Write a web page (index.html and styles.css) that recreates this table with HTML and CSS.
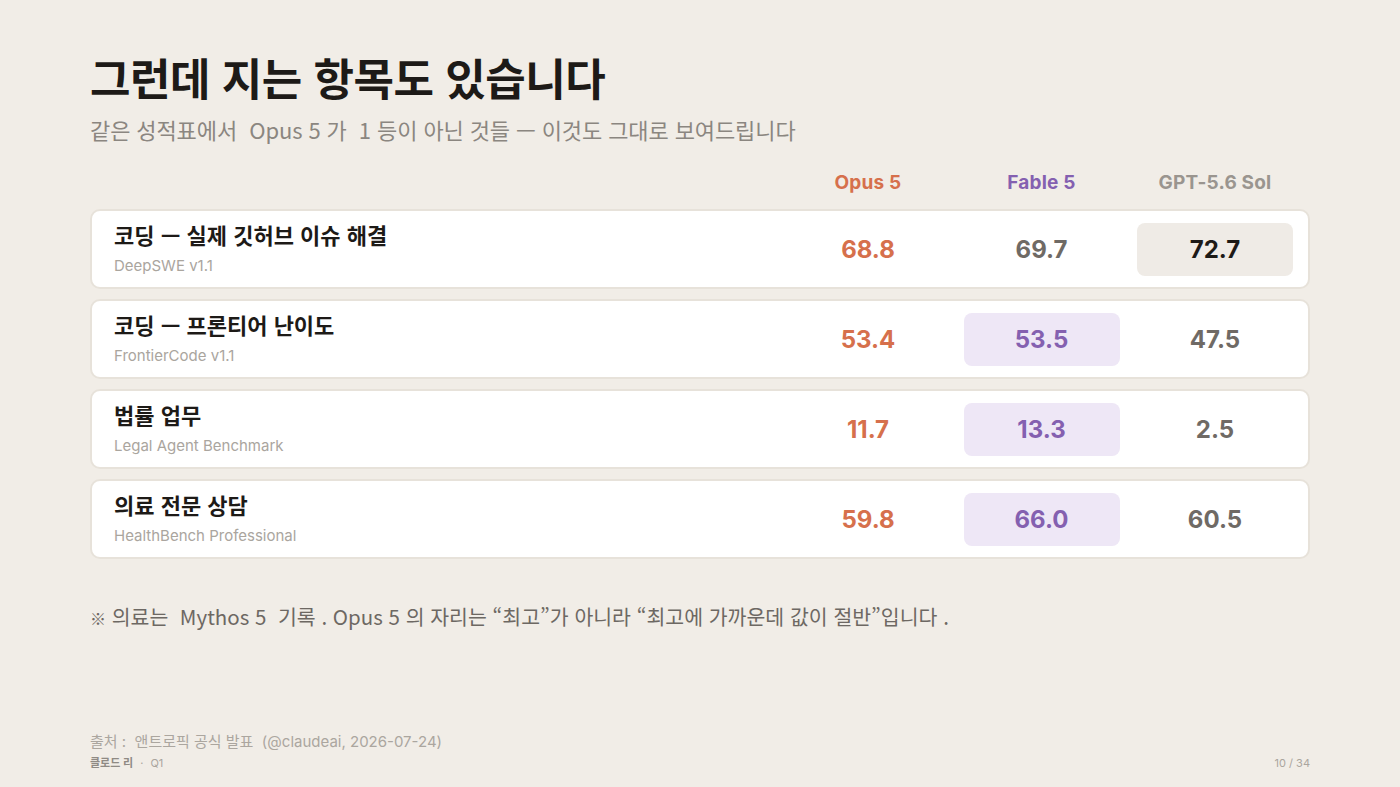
FILE: index.html
```html
<!DOCTYPE html>
<html lang="ko">
<head>
<meta charset="utf-8">
<link rel="stylesheet" href="styles.css">
</head>
<body>
<div class="slide">
  <h1 class="title">그런데 지는 항목도 있습니다</h1>
  <p class="subtitle">같은 성적표에서 &nbsp;Opus 5 가 &nbsp;1 등이 아닌 것들 — 이것도 그대로 보여드립니다</p>

  <div class="head-row">
    <div></div>
    <div class="col-h opus">Opus 5</div>
    <div class="col-h fable">Fable 5</div>
    <div class="col-h gpt">GPT-5.6 Sol</div>
  </div>

  <div class="rows">
    <div class="row">
      <div class="label"><div class="name">코딩 — 실제 깃허브 이슈 해결</div><div class="bench">DeepSWE v1.1</div></div>
      <div class="cell opus">68.8</div>
      <div class="cell plain">69.7</div>
      <div class="cell win-gpt">72.7</div>
    </div>
    <div class="row">
      <div class="label"><div class="name">코딩 — 프론티어 난이도</div><div class="bench">FrontierCode v1.1</div></div>
      <div class="cell opus">53.4</div>
      <div class="cell win-fable">53.5</div>
      <div class="cell plain">47.5</div>
    </div>
    <div class="row">
      <div class="label"><div class="name">법률 업무</div><div class="bench">Legal Agent Benchmark</div></div>
      <div class="cell opus">11.7</div>
      <div class="cell win-fable">13.3</div>
      <div class="cell plain">2.5</div>
    </div>
    <div class="row">
      <div class="label"><div class="name">의료 전문 상담</div><div class="bench">HealthBench Professional</div></div>
      <div class="cell opus">59.8</div>
      <div class="cell win-fable">66.0</div>
      <div class="cell plain">60.5</div>
    </div>
  </div>

  <p class="note"><span class="mark">※</span> 의료는 &nbsp;Mythos 5 &nbsp;기록 . Opus 5 의 자리는 “최고”가 아니라 “최고에 가까운데 값이 절반”입니다 .</p>

  <div class="footer">
    <div class="source">출처 : &nbsp;앤트로픽 공식 발표 &nbsp;(@claudeai, 2026-07-24)</div>
    <div class="bottom">
      <div class="brand"><span class="brand-name">클로드 리</span> <span class="dot">·</span> Q1</div>
      <div class="page">10 / 34</div>
    </div>
  </div>
</div>
</body>
</html>
```

FILE: styles.css
```css
* { box-sizing: border-box; }
html, body { margin: 0; padding: 0; }
body {
  background: #f1ede7;
  font-family: Inter, "Noto Sans CJK KR", sans-serif;
  color: #1f1c19;
}
.slide {
  width: 1400px;
  height: 787px;
  padding: 47px 90px 0 90px;
  display: flex;
  flex-direction: column;
}
.title {
  margin: 0;
  font-size: 44px;
  font-weight: 700;
  letter-spacing: -0.5px;
  line-height: 60px;
  font-family: "Noto Sans CJK KR", sans-serif;
  color: #1d1a17;
}
.subtitle {
  margin: 7px 0 0 0;
  font-size: 22px;
  line-height: 30px;
  color: #8b8680;
  font-family: "Noto Sans CJK KR", sans-serif;
  letter-spacing: -0.1px;
}
.head-row, .row {
  display: grid;
  grid-template-columns: 1fr 156px 156px 156px;
  column-gap: 17.5px;
  padding: 0 15px 0 22px;
}
.head-row {
  margin-top: 21px;
  height: 34px;
  align-items: center;
  padding-left: 24px;
  padding-right: 17px;
}
.col-h {
  text-align: center;
  font-size: 19px;
  font-weight: 700;
  letter-spacing: 0.2px;
}
.col-h.opus { color: #d6704c; }
.col-h.fable { color: #8460b0; }
.col-h.gpt { color: #9a958f; }
.rows {
  margin-top: 10px;
  display: flex;
  flex-direction: column;
  gap: 10px;
}
.row {
  background: #ffffff;
  border: 2px solid #e7e2da;
  border-radius: 10px;
  height: 80px;
  align-items: center;
}
.label { display: flex; flex-direction: column; }
.name {
  font-family: "Noto Sans CJK KR", sans-serif;
  font-size: 22px;
  font-weight: 700;
  line-height: 30px;
  color: #1d1a17;
  margin-top: -3px;
}
.bench {
  font-size: 15px;
  line-height: 20px;
  color: #aaa59e;
  margin-top: 7px;
}
.cell {
  height: 53px;
  border-radius: 8px;
  display: flex;
  align-items: center;
  justify-content: center;
  font-size: 24px;
  font-weight: 700;
}
.cell.opus { color: #d6704c; }
.cell.plain { color: #6f6a65; }
.cell.win-gpt { background: #efebe6; color: #1d1a17; }
.cell.win-fable { background: #eee7f6; color: #8460b0; }
.note {
  margin: 42px 0 0 0;
  font-size: 20.5px;
  line-height: 30px;
  color: #6d6863;
  font-family: "Noto Sans CJK KR", sans-serif;
}
.mark { font-size: 16px; }
.footer {
  margin-top: auto;
  padding-bottom: 16px;
}
.source {
  font-size: 15px;
  color: #aba69f;
  line-height: 22px;
}
.bottom {
  display: flex;
  justify-content: space-between;
  align-items: center;
  margin-top: 2px;
  font-size: 11px;
  line-height: 16px;
  color: #aaa59e;
}
.brand-name { font-weight: 700; color: #8f8a84; }
.dot { margin: 0 4px; }
```
